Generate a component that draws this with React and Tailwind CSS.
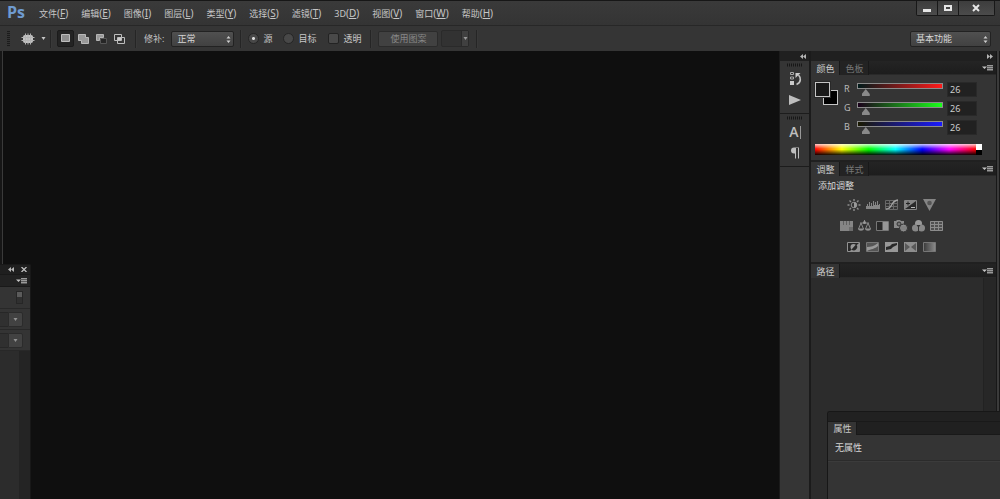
const MENUS = [
  ["文件", "F"],
  ["编辑", "E"],
  ["图像", "I"],
  ["图层", "L"],
  ["类型", "Y"],
  ["选择", "S"],
  ["滤镜", "T"],
  ["3D", "D"],
  ["视图", "V"],
  ["窗口", "W"],
  ["帮助", "H"],
];

const CHANNELS = [
  { name: "R", track: "from-[#001a1a] to-[#ff1a1a]" },
  { name: "G", track: "from-[#1a001a] to-[#1aff1a]" },
  { name: "B", track: "from-[#1a1a00] to-[#1a1aff]" },
];

function Divider() {
  return <div className="h-[18px] w-[2px] shrink-0 border-l border-[#252525] bg-[#393939]" />;
}

function Collapse({ flip }) {
  return (
    <svg viewBox="0 0 6 5" className={`h-[5px] w-[6px] fill-[#b5b5b5] ${flip ? "rotate-180" : ""}`}>
      <path d="M3 0v5L0 2.500zM6 0v5L3 2.500z" />
    </svg>
  );
}

function PanelMenu() {
  return (
    <button aria-label="面板菜单" className="ml-auto mr-[3px] h-[8px] w-[11px]">
      <svg viewBox="0 0 11 8" className="h-[8px] w-[11px]">
        <path d="M0 2.500h5L2.500 5z" fill="#c4c4c4" />
        <path d="M5 1.500h6M5 3.500h6M5 5.500h6" stroke="#999" />
        <path d="M5 2.500h6M5 4.500h6M5 6.500h6" stroke="#5a5a5a" />
      </svg>
    </button>
  );
}

function Grip() {
  return (
    <svg viewBox="0 0 16 4" className="h-[4px] w-[16px]">
      <path d="M0 2h16" stroke="#171717" strokeWidth="3" strokeDasharray="1 1" />
    </svg>
  );
}

function Dropdown({ label, value, className }) {
  return (
    <div className={`relative h-[16px] ${className}`}>
      <select
        aria-label={label}
        className="block h-full w-full appearance-none rounded-[2px] border border-[#222] bg-linear-to-b from-[#505050] to-[#414141] pl-[5px] leading-[12px] text-[#d6d6d6]"
      >
        <option>{value}</option>
      </select>
      <svg viewBox="0 0 5 7" className="pointer-events-none absolute right-[3px] top-[5px] h-[7px] w-[5px] fill-[#cfcfcf]">
        <path d="M.5 2.500l2-2.500 2 2.500zM.5 4.500h4l-2 2.500z" />
      </svg>
    </div>
  );
}

function Tabs({ names }) {
  return (
    <div className="flex h-[14px] items-center border-b border-[#292929] bg-linear-to-b from-[#242424] to-[#1d1d1d]">
      {names.map((name, i) => (
        <button
          key={name}
          className={`h-[14px] w-[29px] self-start border-r border-[#191919] pl-px leading-[13px] ${
            i === 0 ? "bg-[#343434] text-[#cdcdcd]" : "bg-[#232323] text-[#777]"
          }`}
        >
          {name}
        </button>
      ))}
      <PanelMenu />
    </div>
  );
}

function WindowButtons() {
  return (
    <div className="flex h-[15px] rounded-b-[2px] border border-t-0 border-[#181818] bg-linear-to-b from-[#3d3d3d] to-[#4b4b4b]">
      <button aria-label="最小化" className="w-[21px] border-r border-[#181818]">
        <svg viewBox="0 0 20 14" className="h-[14px] w-[20px]">
          <path d="M6 8h8v3H6z" fill="#e6e6e6" />
        </svg>
      </button>
      <button aria-label="最大化" className="w-[21px] border-r border-[#181818]">
        <svg viewBox="0 0 20 14" className="h-[14px] w-[20px]">
          <path d="M7 5h6v4H7z" fill="none" stroke="#e6e6e6" strokeWidth="2" />
        </svg>
      </button>
      <button aria-label="关闭" className="w-[35px]">
        <svg viewBox="0 0 35 14" className="h-[14px] w-[35px]">
          <path d="M14 4l6 6M20 4l-6 6" stroke="#e6e6e6" strokeWidth="2" />
        </svg>
      </button>
    </div>
  );
}

function MenuBar() {
  return (
    <header className="flex h-[25px] items-start border-t border-[#171717] bg-linear-to-b from-[#3a3a3a] to-[#343434] pr-[5px]">
      <div className="flex h-[21px] w-[39px] shrink-0 items-center pl-[7px] font-['Open_Sans',sans-serif] text-[16px] font-bold text-[#6f9bd0]">
        Ps
      </div>
      <nav className="flex h-[24px] items-center gap-[13px] whitespace-nowrap">
        {MENUS.map(([name, key]) => (
          <button key={name} className="leading-[12px] text-[#c6c6c6]">
            {name}
            <span className="text-[10px]">
              (<u>{key}</u>)
            </span>
          </button>
        ))}
      </nav>
      <div className="ml-auto">
        <WindowButtons />
      </div>
    </header>
  );
}

function SelectionModes() {
  const modes = [
    { label: "新选区", art: <path d="M1.500.5h8v7h-8z" fill="#8e8e8e" stroke="#bdbdbd" /> },
    {
      label: "添加到选区",
      art: <path d="M.5.5h7v3h3v6h-7v-3h-3z" fill="#999" stroke="#bababa" />,
    },
    {
      label: "从选区减去",
      art: (
        <>
          <path d="M.5.5h7v3h-4v3h-3z" fill="#999" stroke="#b5b5b5" />
          <path d="M4.500 4.500h6v5h-6z" fill="#262626" stroke="#555" />
        </>
      ),
    },
    {
      label: "与选区交叉",
      art: (
        <>
          <path d="M.5.5h7v6h-7zM3.500 3.500h7v6h-7z" fill="none" stroke="#bdbdbd" />
          <path d="M4 4h3v2H4z" fill="#ccc" />
        </>
      ),
    },
  ];
  return (
    <div className="flex items-center gap-px">
      {modes.map(({ label, art }, i) => (
        <button
          key={label}
          aria-label={label}
          className={`flex h-[17px] w-[17px] items-center justify-center rounded-[2px] ${
            i === 0 ? "border border-[#1b1b1b] bg-[#232323]" : ""
          }`}
        >
          <svg viewBox="0 0 11 10" className="h-[10px] w-[11px]">
            {art}
          </svg>
        </button>
      ))}
    </div>
  );
}

function OptionsBar() {
  return (
    <div className="flex h-[26px] items-center whitespace-nowrap border-t border-[#272727] bg-[#353535] pl-[7px] pr-[9px]">
      <div className="h-[16px] w-[3px] shrink-0 bg-[repeating-linear-gradient(#1c1c1c_0_1px,#333_1px_2px)]" />
      <button aria-label="修补工具" className="ml-[11px] flex items-center gap-[6px]">
        <svg viewBox="0 0 14 12" className="h-[12px] w-[14px]">
          <rect x="2" y="2" width="10" height="8" rx="2" fill="#c4c4c4" />
          <path d="M4.500.5v11M7 .5v11M9.500.5v11M.5 4.500h13M.5 7.500h13" stroke="#b4b4b4" />
        </svg>
        <svg viewBox="0 0 5 3" className="h-[3px] w-[5px] fill-[#c8c8c8]">
          <path d="M.5 0h4l-2 3z" />
        </svg>
      </button>
      <div className="ml-[4px] mr-[5px]">
        <Divider />
      </div>
      <SelectionModes />
      <div className="ml-[7px] mr-[7px]">
        <Divider />
      </div>
      <span className="mr-[7px] text-[#c4c4c4]">修补:</span>
      <Dropdown label="修补" value="正常" className="w-[63px]" />
      <div className="ml-[6px] mr-[6px]">
        <Divider />
      </div>
      {["源", "目标"].map((name, i) => (
        <label key={name} className="mr-[11px] flex items-center gap-[4px] text-[#c8c8c8]">
          <input
            type="radio"
            name="patch"
            defaultChecked={i === 0}
            className="h-[11px] w-[11px] appearance-none rounded-full border border-[#252525] bg-[#484848] checked:bg-[radial-gradient(circle,#ddd_0_1px,#484848_2px)]"
          />
          {name}
        </label>
      ))}
      <label className="ml-px flex items-center gap-[4px] text-[#c8c8c8]">
        <input type="checkbox" className="h-[11px] w-[11px] appearance-none rounded-[2px] border border-[#232323] bg-[#494949]" />
        透明
      </label>
      <div className="ml-[9px] mr-[6px]">
        <Divider />
      </div>
      <button disabled className="h-[16px] w-[60px] rounded-[2px] border border-[#2b2b2b] bg-[#414141] leading-[13px] text-[#888]">
        使用图案
      </button>
      <button disabled aria-label="图案" className="ml-[3px] flex h-[17px] w-[28px] rounded-[2px] border border-[#2a2a2a] bg-[#323232]">
        <span className="ml-auto flex h-full w-[7px] items-center justify-center border-l border-[#2a2a2a] bg-[#404040]">
          <svg viewBox="0 0 5 3" className="h-[3px] w-[5px] fill-[#999]">
            <path d="M.5 0h4l-2 3z" />
          </svg>
        </span>
      </button>
      <div className="ml-[7px]">
        <Divider />
      </div>
      <Dropdown label="工作区" value="基本功能" className="ml-auto w-[81px]" />
    </div>
  );
}

function IconDock() {
  return (
    <aside className="flex w-[32px] shrink-0 flex-col border-l border-r-2 border-[#1b1b1b] bg-[#353535]">
      <div className="flex h-[10px] items-center justify-end bg-[#202020] pr-[3px]">
        <Collapse />
      </div>
      <div className="flex h-[53px] flex-col items-center border-b border-[#1c1c1c] pl-px pt-[2px]">
        <Grip />
        <button aria-label="历史记录" className="mt-[4px]">
          <svg viewBox="0 0 13 15" className="h-[15px] w-[13px]">
            <path d="M1.500 1.500h3v2h-3zM1.500 6h3v2h-3z" fill="none" stroke="#aaa" />
            <path d="M1 10h4v4H1z" fill="#ccc" />
            <path d="M7.500 13.500c5-2 4.500-7 2-9.500" fill="none" stroke="#c4c4c4" strokeWidth="1.600" />
            <path d="M6.500 2h5l-5 5z" fill="#ccc" />
          </svg>
        </button>
        <button aria-label="动作" className="mt-[9px]">
          <svg viewBox="0 0 12 10" className="h-[10px] w-[12px]">
            <path d="M0 0l12 5L0 10z" fill="#bebebe" />
          </svg>
        </button>
      </div>
      <div className="flex h-[53px] flex-col items-center border-b border-[#1c1c1c] pl-px pt-[2px] text-[#bebebe]">
        <Grip />
        <button aria-label="字符" className="mt-[4px] flex items-center font-['Open_Sans',sans-serif] text-[14px] font-semibold leading-[16px]">
          A<span className="ml-[1px] h-[13px] w-px bg-[#999]" />
        </button>
        <button aria-label="段落" className="mt-[7px]">
          <svg viewBox="0 0 10 12" className="h-[12px] w-[10px]">
            <path d="M5 6.500H4A3 3 0 0 1 4 .5h5v11H8V1H6v10.500H5z" fill="#bebebe" />
          </svg>
        </button>
      </div>
    </aside>
  );
}

function ColorPanel() {
  return (
    <section>
      <Tabs names={["颜色", "色板"]} />
      <div className="h-[85px] pl-[4px] pr-[14px] pt-[5px]">
        <div className="flex pr-[5px]">
          <div className="mt-[2px] grid h-[26px] w-[29px] shrink-0 grid-cols-[8px_7px_8px] grid-rows-[8px_7px_8px]">
            <button aria-label="背景色" className="col-span-2 col-start-2 row-span-2 row-start-2 h-[15px] w-[15px] border border-[#c5c5c5] bg-black" />
            <button aria-label="前景色" className="z-10 col-start-1 row-start-1 h-[15px] w-[15px] border border-[#c5c5c5] bg-[#1a1a1a] outline outline-[#292929]" />
          </div>
          <div className="flex flex-1 flex-col gap-[3px]">
            {CHANNELS.map(({ name, track }) => (
              <div key={name} className="flex h-[16px] items-start">
                <label htmlFor={`slider-${name}`} className="w-[13px] pt-[3px] font-['Noto_Sans',sans-serif] leading-[12px] text-[#bbb]">
                  {name}
                </label>
                <div className="flex-1 pt-[3px]">
                  <div className={`h-[6px] border border-[#8b8b8b] bg-linear-to-r/srgb ${track}`} />
                  <div className="-mx-[4px]">
                    <input
                      id={`slider-${name}`}
                      type="range"
                      min="0"
                      max="255"
                      defaultValue="26"
                      className="block h-[7px] w-full appearance-none bg-transparent [&::-webkit-slider-thumb]:h-[7px] [&::-webkit-slider-thumb]:w-[8px] [&::-webkit-slider-thumb]:appearance-none [&::-webkit-slider-thumb]:bg-[#898989] [&::-webkit-slider-thumb]:[clip-path:polygon(50%_0,100%_70%,100%_100%,0_100%,0_70%)]"
                    />
                  </div>
                </div>
                <input
                  aria-label={`${name} 值`}
                  defaultValue="26"
                  className="ml-[4px] mt-[2px] h-[15px] w-[30px] border border-[#292929] bg-[#212121] pl-[2px] font-['Noto_Sans',sans-serif] leading-[13px] text-[#cdcdcd]"
                />
              </div>
            ))}
          </div>
        </div>
        <div className="mt-[10px] flex h-[11px]">
          <div className="flex-1 bg-[linear-gradient(to_bottom,#fffc,#fff0_45%,#0000_50%,#000e),linear-gradient(to_right,red,#ff0,lime,cyan,blue,#f0f,red)]" />
          <div className="w-[6px] bg-linear-to-b from-white from-50% to-black to-50%" />
        </div>
      </div>
    </section>
  );
}

const ADJUSTMENTS = [
  [
    {
      label: "亮度/对比度",
      art: (
        <>
          <path d="M7 0v2M7 10v2M.5 6h2M11.500 6h2M2.500 1.500l1.500 1.500M10 9l1.500 1.500M11.500 1.500L10 3M4 9l-1.500 1.500" stroke="#8d8d8d" strokeWidth="1.400" />
          <circle cx="7" cy="6" r="2.800" fill="none" stroke="#8d8d8d" />
          <path d="M7 3.200a2.800 2.800 0 0 1 0 5.600z" fill="#9a9a9a" />
        </>
      ),
    },
    {
      label: "色阶",
      art: <path d="M0 10V7h1V5h1v2h1V3h1v4h1V4h1v3h1V2h1v4h1V3h1v3h1V2h1v4h1V5h1v5z" fill="#868686" />,
    },
    {
      label: "曲线",
      art: (
        <>
          <path d="M.5 1.500h12v9H.5zM4.500 1v10M8.500 1v10M0 4.500h13M0 7.500h13" fill="none" stroke="#686868" />
          <path d="M1 10c7 0 4-8 12-9" fill="none" stroke="#a3a3a3" strokeWidth="1.300" />
        </>
      ),
    },
    {
      label: "曝光度",
      art: (
        <>
          <path d="M.5 1.500h12v9H.5z" fill="#292929" stroke="#858585" />
          <path d="M1 2h11L1 10z" fill="#858585" />
          <path d="M2 4.500h4M4 2.500v4" stroke="#202020" />
          <path d="M7 8.500h4" stroke="#bbb" />
        </>
      ),
    },
    {
      label: "自然饱和度",
      art: (
        <>
          <path d="M0 0h13L6.500 12z" fill="#858585" />
          <circle cx="6.500" cy="4" r="2.300" fill="#555" />
        </>
      ),
    },
  ],
  [
    {
      label: "色相/饱和度",
      art: (
        <>
          <path d="M0 1h13v10H0z" fill="#858585" />
          <path d="M3.500 1v4M6.500 1v4M9.500 1v4" stroke="#606060" />
          <path d="M9 7h4v4H9z" fill="#6c6c6c" />
        </>
      ),
    },
    {
      label: "色彩平衡",
      art: (
        <>
          <path d="M6.500 0v3M2 3h9M3 3L.5 9M3 3l2.500 6M10 3L7.500 9M10 3l2.500 6" fill="none" stroke="#8a8a8a" />
          <path d="M0 8.500h6c0 3-6 3-6 0zM7 8.500h6c0 3-6 3-6 0z" fill="#8f8f8f" />
          <circle cx="6.500" cy="2.500" r="1.500" fill="#999" />
        </>
      ),
    },
    {
      label: "黑白",
      art: (
        <>
          <path d="M.5 1.500h12v9H.5z" fill="#292929" stroke="#777" />
          <path d="M6.500 2H12v8H6.500z" fill="#979797" />
        </>
      ),
    },
    {
      label: "照片滤镜",
      art: (
        <>
          <path d="M0 1h2l1-1h3l1 1h3v7H0z" fill="#8a8a8a" />
          <circle cx="5" cy="4" r="2" fill="#777" stroke="#333" />
          <circle cx="9.500" cy="8" r="4" fill="#8b8b8b" stroke="#343434" />
          <path d="M7 7h5M7 9h5" stroke="#777" />
        </>
      ),
    },
    {
      label: "通道混合器",
      art: (
        <>
          <circle cx="6.500" cy="3.500" r="3.500" fill="#999" />
          <circle cx="3.500" cy="8" r="3.500" fill="#888" />
          <circle cx="9.500" cy="8" r="3.500" fill="#888" />
          <path d="M4.500 5h4L7 7v4H6V7z" fill="#343434" />
        </>
      ),
    },
    {
      label: "颜色查找",
      art: (
        <>
          <path d="M0 1h13v10H0z" fill="#505050" />
          <path d="M.5 1.500h12v9H.5zM4.500 1v10M8.500 1v10M0 4.500h13M0 7.500h13" fill="none" stroke="#8c8c8c" />
        </>
      ),
    },
  ],
  [
    {
      label: "反相",
      art: (
        <>
          <path d="M.5 1.500h12v9H.5z" fill="#292929" stroke="#929292" />
          <path d="M12 2v8H3z" fill="#929292" />
          <circle cx="6.500" cy="6" r="3" fill="#999" />
          <path d="M4.500 8.500l4.500-5a3 3 0 0 1-4.500 5z" fill="#292929" />
        </>
      ),
    },
    {
      label: "色调分离",
      art: (
        <>
          <path d="M.5 1.500h12v9H.5z" fill="#555" stroke="#777" />
          <path d="M1 6c4 0 7-1 11-4v3C9 8 5 8 1 10z" fill="#999" />
        </>
      ),
    },
    {
      label: "阈值",
      art: (
        <>
          <path d="M0 1h13v10H0z" fill="#989898" />
          <path d="M1 6l4-1 2-2 5-1v2L8 6 6 8 1 9z" fill="#292929" />
        </>
      ),
    },
    {
      label: "可选颜色",
      art: (
        <>
          <path d="M0 1h13v10H0z" fill="#8e8e8e" />
          <path d="M1 2l5 4-5 4zM12 2L7 6l5 4z" fill="#595959" />
        </>
      ),
    },
    {
      label: "渐变映射",
      art: (
        <>
          <defs>
            <linearGradient id="map">
              <stop stopColor="#3a3a3a" />
              <stop offset="1" stopColor="#8c8c8c" />
            </linearGradient>
          </defs>
          <path d="M.5 1.500h12v9H.5z" fill="url(#map)" stroke="#777" />
        </>
      ),
    },
  ],
];

function AdjustmentsPanel() {
  return (
    <section className="border-t-2 border-[#202020]">
      <Tabs names={["调整", "样式"]} />
      <div className="h-[86px] pt-[3px]">
        <h2 className="pl-[7px] leading-[14px] text-[#d8d8d8]">添加调整</h2>
        <div className="mt-[6px] flex flex-col gap-[9px] pr-[24px]">
          {ADJUSTMENTS.map((row, i) => (
            <div key={i} className={`flex justify-center ${row.length > 5 ? "gap-[4px]" : "gap-[5px]"}`}>
              {row.map(({ label, art }) => (
                <button key={label} aria-label={label}>
                  <svg viewBox="0 0 14 12" className="h-[12px] w-[14px]">
                    {art}
                  </svg>
                </button>
              ))}
            </div>
          ))}
        </div>
      </div>
    </section>
  );
}

function PathsPanel() {
  return (
    <section className="flex flex-1 flex-col border-t-2 border-[#202020]">
      <Tabs names={["路径"]} />
      <div className="flex flex-1 bg-[#2c2c2c]">
        <div className="ml-auto w-[13px] border-l border-[#222] bg-[#272727]" />
      </div>
    </section>
  );
}

/* floating brush window, partly off the left edge */
function ToolWindow() {
  return (
    <div className="absolute bottom-0 left-0 top-[213px] flex w-[31px] flex-col rounded-tr-[2px] border-r border-t border-[#181818] bg-[#343434]">
      <div className="flex h-[9px] items-center justify-end gap-[7px] bg-[#1f1f1f] pr-[3px]">
        <Collapse />
        <button aria-label="关闭面板" className="h-[5px] w-[6px]">
          <svg viewBox="0 0 6 5" className="h-[5px] w-[6px]">
            <path d="M.5 0l5 5M5.500 0l-5 5" stroke="#c4c4c4" strokeWidth="1.200" />
          </svg>
        </button>
      </div>
      <div className="flex h-[13px] items-center border-b border-t border-[#191919] bg-[#222]">
        <PanelMenu />
      </div>
      <div className="flex h-[22px] justify-end border-b border-[#282828] pr-[7px] pt-[4px]">
        <div className="h-[13px] w-[7px] border border-[#262626] bg-[#303030]">
          <div className="h-[5px] bg-[#5b5b5b]" />
        </div>
      </div>
      {["大小", "硬度"].map((name) => (
        <div key={name} className="flex h-[21px] items-center border-b border-[#282828]">
          <div className="h-[15px] flex-1 border-y border-[#272727] bg-[#303030]" />
          <button aria-label={name} className="mr-[7px] flex h-[15px] w-[15px] items-center justify-center rounded-r-[2px] border border-[#2b2b2b] bg-[#424242]">
            <svg viewBox="0 0 5 3" className="h-[3px] w-[5px] fill-[#929292]">
              <path d="M.5 0h4l-2 3z" />
            </svg>
          </button>
        </div>
      ))}
      <div className="flex flex-1 bg-[#2c2c2c]">
        <div className="ml-auto w-[11px] bg-[#242424]" />
      </div>
    </div>
  );
}

function PropertiesWindow() {
  return (
    <div className="absolute bottom-0 right-0 top-[360px] flex w-[173px] flex-col rounded-tl-[3px] border-l border-t border-[#171717] bg-[#343434]">
      <div className="h-[9px] rounded-tl-[2px] bg-[#212121]" />
      <div className="flex h-[14px] border-b border-t border-[#191919] bg-[#202020]">
        <button className="h-[13px] w-[29px] border-r border-[#191919] bg-[#343434] pl-px leading-[12px] text-[#c8c8c8]">属性</button>
      </div>
      <p className="h-[26px] border-b border-[#2b2b2b] pl-[7px] leading-[26px] text-[#d4d4d4]">无属性</p>
      <div className="h-px bg-[#3b3b3b]" />
    </div>
  );
}

export default function App() {
  return (
    <div className="flex min-h-screen flex-col bg-[#353535] font-['Noto_Sans','Noto_Sans_CJK_SC',sans-serif] text-[9px] leading-[12px]">
      <MenuBar />
      <OptionsBar />
      <main className="relative flex flex-1">
        <div className="w-[3px] border-r border-[#3a3a3a] bg-[#161616]" />
        <div className="flex-1 bg-[#0f0f0f]" />
        <IconDock />
        <aside className="flex w-[185px] shrink-0 flex-col bg-[#343434]">
          <div className="flex h-[10px] items-center justify-end bg-[#202020] pr-[3px]">
            <Collapse flip />
          </div>
          <ColorPanel />
          <AdjustmentsPanel />
          <PathsPanel />
        </aside>
        <div className="w-[4px] border-x border-[#181818] bg-[#3b3b3b]" />
        <ToolWindow />
        <PropertiesWindow />
      </main>
    </div>
  );
}
